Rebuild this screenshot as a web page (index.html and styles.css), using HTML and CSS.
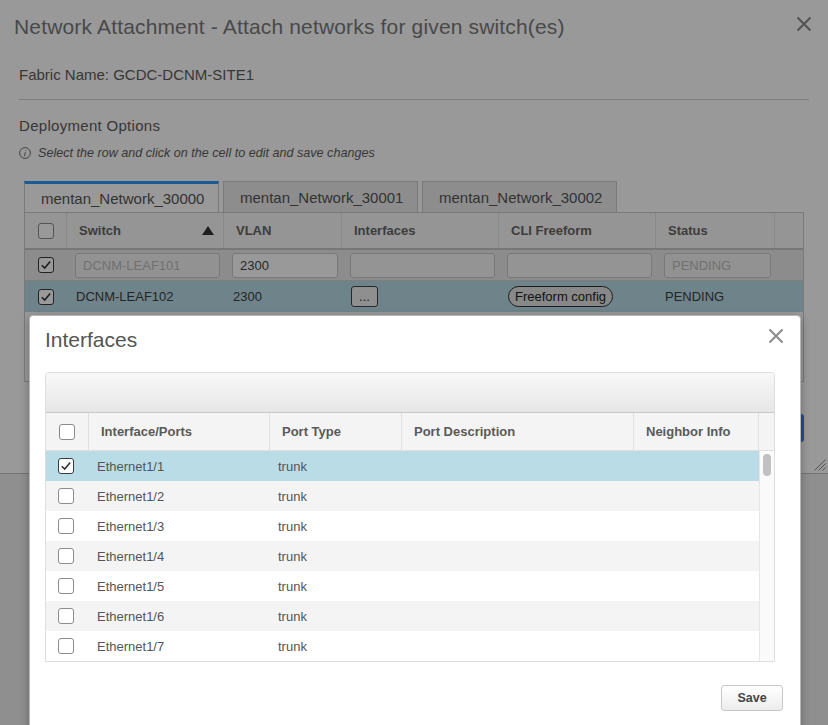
FILE: index.html
```html
<!DOCTYPE html>
<html lang="en">
<head>
<meta charset="utf-8">
<title>Network Attachment</title>
<link rel="stylesheet" href="styles.css">
</head>
<body>
<div class="page">
  <section class="dlg">
    <div class="dlg-head">
      <h1 class="dlg-title">Network Attachment - Attach networks for given switch(es)</h1>
      <svg class="close close-outer" viewBox="0 0 16 16"><path d="M1.5 1.5 L14.5 14.5 M14.5 1.5 L1.5 14.5"/></svg>
    </div>
    <div class="dlg-body">
      <div class="fabric">Fabric Name: GCDC-DCNM-SITE1</div>
      <div class="sep"></div>
      <div class="deploy">Deployment Options</div>
      <div class="info">
        <svg class="info-ic" viewBox="0 0 12 12"><circle cx="6" cy="6" r="5.4"/><path d="M6.3 5.1 L5.5 9.2 M6.7 3 L6.6 3.6"/></svg>
        <span>Select the row and click on the cell to edit and save changes</span>
      </div>
      <div class="tabs">
        <div class="tab active">mentan_Network_30000</div>
        <div class="tab">mentan_Network_30001</div>
        <div class="tab">mentan_Network_30002</div>
      </div>
      <div class="ogrid">
        <div class="orow ohead">
          <div class="oc occb"><span class="cb dim"></span></div>
          <div class="oc sort">Switch<svg class="sort-ic" viewBox="0 0 12 9"><polygon points="6,0 12,9 0,9"/></svg></div>
          <div class="oc">VLAN</div>
          <div class="oc">Interfaces</div>
          <div class="oc">CLI Freeform</div>
          <div class="oc">Status</div>
          <div class="oc"></div>
        </div>
        <div class="orow ofilter">
          <div class="oc occb"><span class="cb on"><svg viewBox="0 0 14 14"><path d="M2.8 7.2 L5.7 10.1 L11.2 3.6"/></svg></span></div>
          <div class="oc"><input class="inp dis" value="DCNM-LEAF101" disabled></div>
          <div class="oc"><input class="inp" value="2300"></div>
          <div class="oc"><input class="inp soft" value=""></div>
          <div class="oc"><input class="inp soft" value=""></div>
          <div class="oc"><input class="inp dis" value="PENDING" disabled></div>
          <div class="oc"></div>
        </div>
        <div class="orow osel">
          <div class="oc occb"><span class="cb on"><svg viewBox="0 0 14 14"><path d="M2.8 7.2 L5.7 10.1 L11.2 3.6"/></svg></span></div>
          <div class="oc">DCNM-LEAF102</div>
          <div class="oc">2300</div>
          <div class="oc"><button class="dots">...</button></div>
          <div class="oc"><button class="pill">Freeform config</button></div>
          <div class="oc">PENDING</div>
          <div class="oc"></div>
        </div>
      </div>
      <div class="btnrow"><button class="primary">Save</button></div>
    </div>
    <svg class="resize" viewBox="0 0 12 12"><path d="M11.5 0.5 L0.5 11.5 M11.5 4.5 L4.5 11.5 M11.5 8.5 L8.5 11.5"/></svg>
  </section>

  <div class="overlay"></div>

  <section class="modal">
    <div class="m-head">
      <h2 class="m-title">Interfaces</h2>
      <svg class="close close-inner" viewBox="0 0 16 16"><path d="M1.5 1.5 L14.5 14.5 M14.5 1.5 L1.5 14.5"/></svg>
    </div>
    <div class="igrid">
      <div class="itool"></div>
      <div class="ihead">
        <div class="ic iccb"><span class="cb"></span></div>
        <div class="ic">Interface/Ports</div>
        <div class="ic">Port Type</div>
        <div class="ic">Port Description</div>
        <div class="ic">Neighbor Info</div>
        <div class="ic"></div>
      </div>
      <div class="ibody">
        <div class="irows">
          <div class="irow sel">
            <div class="ic iccb"><span class="cb on"><svg viewBox="0 0 14 14"><path d="M2.8 7.2 L5.7 10.1 L11.2 3.6"/></svg></span></div>
            <div class="ic">Ethernet1/1</div><div class="ic">trunk</div><div class="ic"></div><div class="ic"></div>
          </div>
          <div class="irow">
            <div class="ic iccb"><span class="cb"></span></div>
            <div class="ic">Ethernet1/2</div><div class="ic">trunk</div><div class="ic"></div><div class="ic"></div>
          </div>
          <div class="irow">
            <div class="ic iccb"><span class="cb"></span></div>
            <div class="ic">Ethernet1/3</div><div class="ic">trunk</div><div class="ic"></div><div class="ic"></div>
          </div>
          <div class="irow">
            <div class="ic iccb"><span class="cb"></span></div>
            <div class="ic">Ethernet1/4</div><div class="ic">trunk</div><div class="ic"></div><div class="ic"></div>
          </div>
          <div class="irow">
            <div class="ic iccb"><span class="cb"></span></div>
            <div class="ic">Ethernet1/5</div><div class="ic">trunk</div><div class="ic"></div><div class="ic"></div>
          </div>
          <div class="irow">
            <div class="ic iccb"><span class="cb"></span></div>
            <div class="ic">Ethernet1/6</div><div class="ic">trunk</div><div class="ic"></div><div class="ic"></div>
          </div>
          <div class="irow">
            <div class="ic iccb"><span class="cb"></span></div>
            <div class="ic">Ethernet1/7</div><div class="ic">trunk</div><div class="ic"></div><div class="ic"></div>
          </div>
        </div>
        <div class="itrack"><div class="ithumb"></div></div>
      </div>
    </div>
    <div class="m-foot"><button class="btn">Save</button></div>
  </section>
</div>
</body>
</html>
```
FILE: styles.css
```css
* { box-sizing: border-box; }
html, body { margin: 0; padding: 0; }
body { font-family: "Liberation Sans", Arial, sans-serif; background: #eeeeee; }

.page { position: relative; width: 828px; height: 725px; overflow: hidden; background: #eeeeee; }

/* ---------- outer dialog ---------- */
.dlg { position: relative; height: 474px; background: #fff; border-bottom: 1px solid #c4c4c4; }
.dlg-head { display: flex; justify-content: space-between; align-items: flex-start; padding: 15px 16px 0 14px; }
.dlg-title { margin: 0; font-size: 21px; font-weight: 400; line-height: 24px; letter-spacing: .16px; color: #7a7a7a; }
.close { width: 16px; height: 16px; fill: none; stroke-width: 2; }
.close-outer { stroke: #8a8a8a; margin-top: 1px; }

.dlg-body { padding: 0 19px; }
.fabric { margin-top: 27px; font-size: 15px; line-height: 18px; color: #5c5c5c; }
.sep { margin-top: 15px; height: 1px; background: #d0d0d0; }
.deploy { margin-top: 17px; font-size: 15px; letter-spacing: .3px; line-height: 18px; color: #5c5c5c; }
.info { margin-top: 10px; display: flex; align-items: center; gap: 7px; font-size: 12.6px; font-style: italic; line-height: 16px; color: #5e5e5e; }
.info-ic { width: 12px; height: 12px; fill: none; stroke: #707070; stroke-width: 1; }

.tabs { margin: 20px 5px 0; display: flex; gap: 4px; }
.tab { width: 195px; height: 31px; border: 1px solid #cbcbcb; border-bottom: 0; background: #ececec; padding-left: 16px; display: flex; align-items: center; font-size: 15px; color: #555; }
.tab.active { background: #fff; border-top: 3px solid rgb(45, 150, 250); }

.ogrid { margin: 0 5px; height: 170px; border: 1px solid #cbcbcb; background: #fff; }
.orow { display: grid; grid-template-columns: 42px 157px 118px 157px 157px 119px 1fr; align-items: center; }
.oc { display: flex; align-items: center; height: 100%; }
.ohead { height: 37px; background: #f8f8f8; border-bottom: 2px solid #c6c6c6; font-weight: 700; font-size: 13px; color: #666; }
.ohead .oc { border-right: 1px solid #e4e4e4; padding-left: 12px; }
.ohead .oc:last-child { border-right: 0; }
.oc.occb { justify-content: center; }
.ohead .oc.occb { padding-left: 0; }
.sort { justify-content: space-between; padding-right: 9px; }
.sort-ic { width: 12px; height: 9px; fill: #353535; }

.ofilter { height: 31px; background: #eaeaea; border-bottom: 1px solid #d2d2d2; }
.ofilter .oc { padding: 0 4px 0 8px; }
.ofilter .oc.occb { padding: 0; }
.inp { width: 100%; height: 25px; border: 1px solid #c9c9c9; border-radius: 3px; padding: 0 7px; font: 13px "Liberation Sans", Arial, sans-serif; color: #444; background: #fff; outline: none; }
.inp.dis { background: #f4f4f4; color: #bdbdbd; }
.inp.soft { background: #f7f7f7; }

.osel { height: 31px; background: #b9dce6; font-size: 13px; color: #3c3c3c; }
.osel .oc { padding-left: 9px; }
.osel .oc.occb { padding-left: 0; }
.dots { width: 27px; height: 21px; padding: 0; border: 1px solid #444; border-radius: 3px; background: #efefef; font: 13px "Liberation Sans", Arial, sans-serif; color: #333; }
.pill { height: 21px; padding: 0 6px; border: 1.5px solid #2e2e2e; border-radius: 11px; background: #e3e3e3; font: 13px "Liberation Sans", Arial, sans-serif; color: #222; }

.btnrow { display: flex; justify-content: flex-end; margin: 32px 5px 0; }
.primary { width: 80px; height: 28px; border: 0; border-radius: 3px; background: rgb(50, 135, 245); color: #fff; font: 13px "Liberation Sans", Arial, sans-serif; }

.resize { position: absolute; right: 2px; bottom: 2px; width: 12px; height: 12px; fill: none; stroke: #8a8a8a; stroke-width: 1; }

/* ---------- checkbox ---------- */
.cb { width: 16px; height: 16px; border: 1px solid #8c8c8c; border-radius: 3px; background: #fff; display: inline-flex; align-items: center; justify-content: center; }
.cb.on { border-color: #3a3a3a; }
.cb svg { width: 14px; height: 14px; fill: none; stroke: #333; stroke-width: 1.6; }

/* ---------- overlay + modal ---------- */
.overlay { position: absolute; inset: 0; background: rgba(0, 0, 0, .4); z-index: 1; }
.modal { position: absolute; left: 29px; top: 315px; width: 772px; height: 430px; z-index: 2; background: #fff; border: 1px solid #b8b8b8; border-radius: 4px 4px 0 0; padding: 12px 0 0 15px; box-shadow: 0 3px 10px rgba(0, 0, 0, .3); }
.m-head { display: flex; justify-content: space-between; align-items: flex-start; padding-right: 16px; }
.m-title { margin: 0; font-size: 21px; font-weight: 400; line-height: 24px; color: #555; }
.close-inner { stroke: #8c8c8c; }

.igrid { margin-top: 20px; width: 730px; border: 1px solid #dedede; border-radius: 4px 4px 0 0; overflow: hidden; }
.itool { height: 40px; background: linear-gradient(#f8f8f8, #e6e6e6); border-bottom: 1px solid #c8c8c8; }
.ihead { display: grid; grid-template-columns: 43px 181px 132px 232px 125px 1fr; height: 38px; background: #f4f4f4; border-bottom: 1px solid #e0e0e0; font-weight: 700; font-size: 13px; color: #5a5a5a; }
.ihead .ic { display: flex; align-items: center; padding-left: 12px; border-right: 1px solid #e0e0e0; }
.ihead .ic.iccb { padding-left: 0; justify-content: center; }
.ihead .ic:last-child { border-right: 0; }

.ibody { display: flex; }
.irows { width: 713px; }
.irow { display: grid; grid-template-columns: 43px 181px 132px 232px 125px; height: 30px; align-items: center; font-size: 13px; color: #555; }
.irow:nth-child(even) { background: #f4f4f4; }
.irow.sel { background: #b9dce6; }
.irow .ic { padding-left: 8px; }
.irow .ic.iccb { padding: 0 3px 0 0; display: flex; justify-content: center; }
.itrack { flex: 1; background: #fafafa; border-left: 1px solid #e6e6e6; padding: 3px 0 0 3px; }
.ithumb { width: 8px; height: 22px; border-radius: 4px; background: #c1c1c1; }

.m-foot { display: flex; justify-content: flex-end; padding-right: 17px; margin-top: 23px; }
.btn { width: 62px; height: 26px; border: 1px solid #c6c6c6; border-radius: 3px; background: linear-gradient(#fff, #ededed); font: 700 12.5px "Liberation Sans", Arial, sans-serif; color: #444; }
```
